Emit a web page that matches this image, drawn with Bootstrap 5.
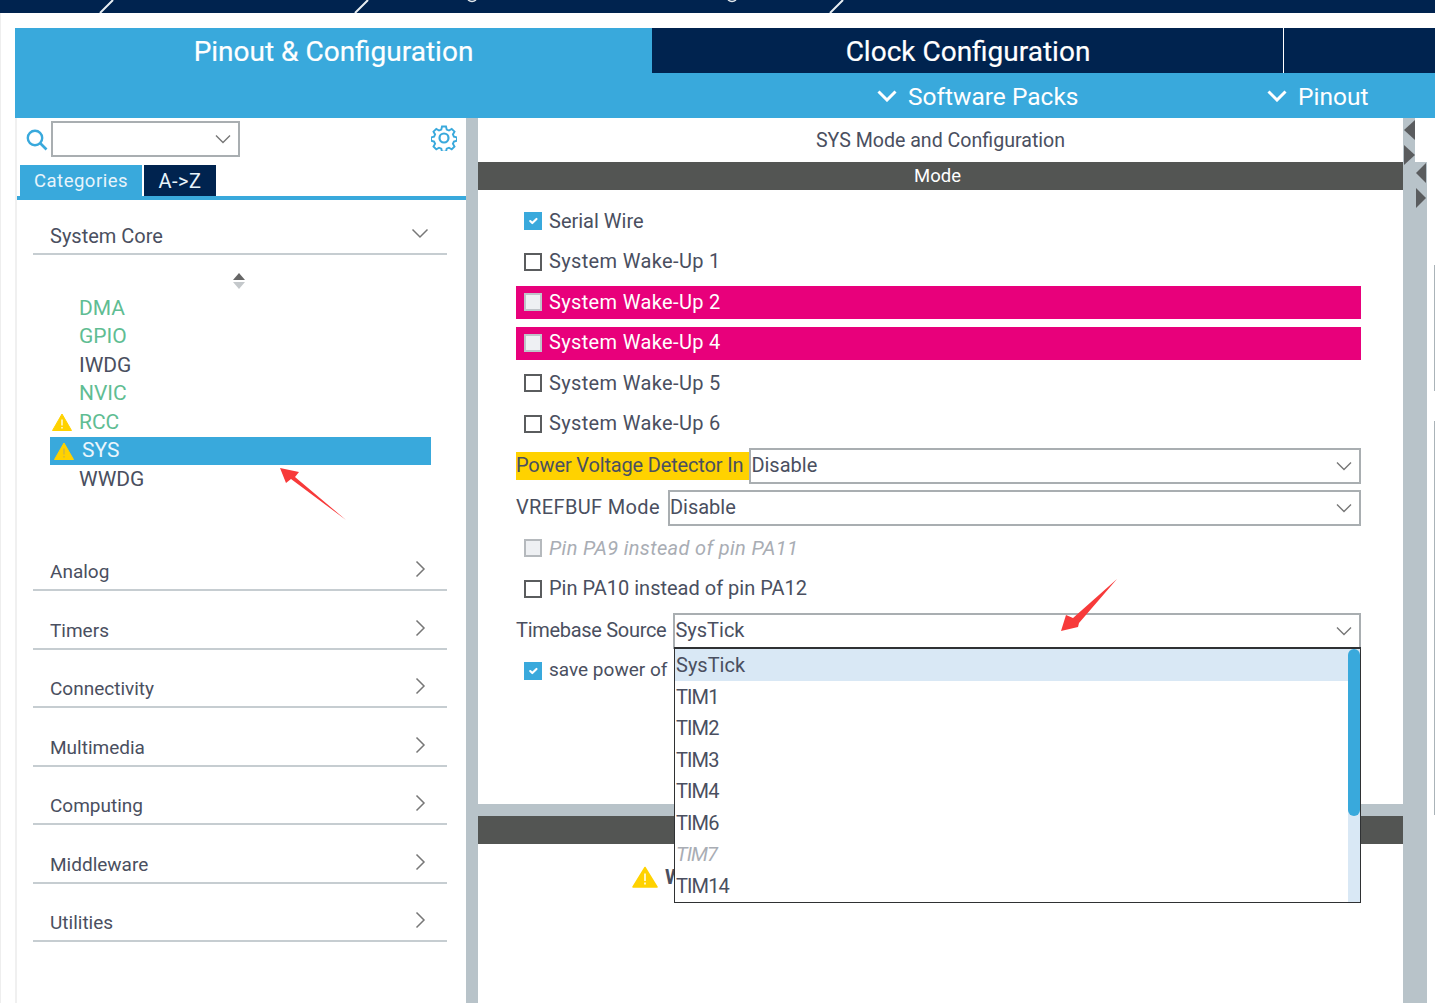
<!DOCTYPE html>
<html lang="en">
<head>
<meta charset="utf-8">
<title>SYS Mode and Configuration</title>
<link rel="stylesheet" href="https://cdn.jsdelivr.net/npm/bootstrap@5.3.0/dist/css/bootstrap.min.css">
<style>
:root{--navy:#00234f;--sky:#39a9dc;--steel:#b8c3c9;--slate:#535553;--ink:#4a4f60;}
html,body{height:1003px;overflow:hidden;}
body{position:relative;background:#fff;box-shadow:inset 1px 0 #eee;font-family:Roboto,"Liberation Sans",sans-serif;color:var(--ink);font-size:20px;line-height:1.2;}
.topbar{height:13px;background:var(--navy);}
.topbar svg{display:block;width:100%;height:13px;}
.shell{margin:15px 0 0 15px;}
.tab-row{height:45px;background:var(--navy);}
.tab-main{font-size:28px;color:#fff;height:45px;padding-top:3px;-webkit-text-stroke:.2px #fff;}
.tab-pin{width:637px;background:var(--sky);margin-right:1px;}
.tab-clk{width:631px;border-right:1px solid #fff;}
.sub-row{height:45px;background:var(--sky);color:#fff;font-size:24.5px;padding-top:2px;}
.sub-soft{margin-left:862px;width:390px;}
.sub-soft span,.sub-pin span{margin-left:3px;}
.body-row{height:885px;}
.left-pane{width:451px;border-left:2px solid #f0f0f0;}
.searchline{height:47px;padding:3px 9px 0 9px;}
.select-plain{appearance:none;height:36px;border:2px solid #a9aeb1;border-radius:0;background:#fff url("data:image/svg+xml,%3csvg xmlns='http://www.w3.org/2000/svg' viewBox='0 0 16 10'%3e%3cpath fill='none' stroke='%23777' stroke-width='1.4' d='M1 1.5l7 7 7-7'/%3e%3c/svg%3e") no-repeat right 7px center/16px 10px;font:20px Roboto,sans-serif;color:var(--ink);padding:0 30px 2px 0;box-shadow:none;}
.search-sel{width:189px;margin-left:3px;}
.tabs-line{height:35px;border-bottom:4px solid var(--sky);padding-left:3px;gap:2px;}
.cat-tab{height:31px;color:#e8f4fb;padding:1px 0 0;}
.cat-a{width:122px;background:var(--sky);font-size:18.5px;letter-spacing:.5px;}
.cat-b{width:72px;background:var(--navy);font-size:20px;letter-spacing:.5px;}
.side-list{padding:0 19px 0 16px;}
.sec-head{border-bottom:2px solid #c6cdd1;padding:0 21px 0 17px;}
.sec-head span{line-height:24px;padding-bottom:5px;}
.sec-head svg{margin-bottom:11px;}
.sec-first{height:55px;padding-right:18px;}
.sec-first svg{margin-bottom:14px;}
.sec-more{height:58.5px;font-size:19px;}
.sort-ico{height:39px;padding-left:200px;padding-top:12px;}
.peri{height:28.5px;padding-left:29px;font-size:21px;position:relative;width:381px;}
.peri-wrap{margin-left:17px;}
.peri.ok{color:#5fbd93;}
.peri.sel{background:var(--sky);color:#eaf6fc;padding-left:32px;}
.peri svg{flex:none;position:absolute;left:2px;top:5px;}
.peri.sel svg{left:4px;}
.spacer-side{height:39px;}
.divider-v{width:12px;background:var(--steel);}
.mid-pane{width:925px;position:relative;}
.pane-title{height:44px;font-size:19.6px;padding-top:1px;}
.pane-bar{height:28px;background:var(--slate);color:#fff;font-size:18.5px;padding-right:6px;}
.mode-list{height:614px;padding:15px 42px 0 38px;}
.mrow{height:33px;margin-bottom:7.5px;white-space:nowrap;}
.mrow > span{margin-bottom:2px;}
.mrow.hot{background:#e8007b;color:#fff;}
.mrow.hot .form-check-input{background:#eef0f3;border-color:#bfc4c9;}
.mrow.tall{height:35px;margin-bottom:7px;}
.form-check-input.box{width:18px;height:18px;margin:0 7px 1px 8px;border:2px solid #5a5c5e;border-radius:0;flex:none;float:none;}
.form-check-input.box:checked{background-color:var(--sky);border-color:var(--sky);}
.form-check-input.box:disabled{opacity:1;background-color:#eef0f3;border-color:#b5b9bd;}
.wide-txt{letter-spacing:.35px;}
.tight-txt{letter-spacing:-.16px;}
.tighter-txt{letter-spacing:-.3px;margin-right:-1px;}
.small-txt{font-size:19px;}
.warn-lab{background:#ffd200;height:28px;padding:0 6px 2px 0;display:flex;align-items:center;margin-bottom:0!important;}
.fill-sel{flex:1;min-width:0;}
.mute-it{color:#a9adb4;font-style:italic;}
.mid-gap{height:12px;background:var(--steel);}
.mid-note{padding:21px 0 0 154px;}
.note-w{font-weight:700;margin-left:7px;}
.side-rail{width:24px;}
.rail-top{width:12px;height:44px;background:var(--steel);}
.rail-rest{flex:1;background:var(--steel);}
.rail-white{width:8px;}
.listbox{position:absolute;left:674px;top:647px;width:687px;height:256px;background:#fff;border:1.5px solid #2f3133;border-top-width:2px;overflow:hidden;z-index:3;font-size:20px;}
.lb-row{height:31.5px;padding-left:1px;}
.lb-row.tim{letter-spacing:-.9px;}
.lb-row.active{height:32px;background:#d9e8f5;padding-right:12px;}
.lb-bar{position:absolute;right:0;top:0;bottom:0;width:12px;background:#d9e8f5;}
.lb-thumb{height:167px;background:var(--sky);border-radius:6px;}
.overlay-svg{position:absolute;z-index:5;pointer-events:none;}
.edge-lines{position:absolute;left:1434px;width:1px;background:#aab3b8;}
.tri{position:absolute;z-index:2;}
</style>
</head>
<body>
<div class="topbar">
<svg viewBox="0 0 1435 13" preserveAspectRatio="none" aria-hidden="true"><path d="M100 13L113 0M355 13L368 0M830 13L843 0" stroke="#e8eef2" stroke-width="2" fill="none"/><path d="M468 0q4 3 8 0M728 0q4 3 8 0" stroke="#dfe6ea" stroke-width="1.5" fill="none"/></svg>
</div>
<div class="shell">
  <div class="tab-row d-flex">
    <div class="tab-main tab-pin d-flex align-items-center justify-content-center">Pinout &amp; Configuration</div>
    <div class="tab-main tab-clk d-flex align-items-center justify-content-center">Clock Configuration</div>
  </div>
  <div class="sub-row d-flex align-items-center">
    <div class="sub-soft d-flex align-items-center gap-2">
      <svg width="20" height="12" viewBox="0 0 20 12" aria-hidden="true"><path d="M1.5 1.5L10 10l8.5-8.500" fill="none" stroke="#fff" stroke-width="3"/></svg>
      <span>Software Packs</span>
    </div>
    <div class="sub-pin d-flex align-items-center gap-2">
      <svg width="20" height="12" viewBox="0 0 20 12" aria-hidden="true"><path d="M1.5 1.5L10 10l8.5-8.500" fill="none" stroke="#fff" stroke-width="3"/></svg>
      <span>Pinout</span>
    </div>
  </div>
  <div class="body-row d-flex">
    <div class="left-pane">
      <div class="searchline d-flex align-items-start justify-content-between">
        <div class="d-flex align-items-start">
          <svg class="mt-2" width="22" height="22" viewBox="0 0 22 22" aria-hidden="true"><circle cx="9" cy="9" r="7.2" fill="none" stroke="#39a9dc" stroke-width="2.4"/><path d="M14 14l6.5 6.5" stroke="#39a9dc" stroke-width="2.6"/></svg>
          <select class="form-select select-plain search-sel" aria-label="Search"><option></option></select>
        </div>
        <svg class="mt-1" width="26" height="26" viewBox="0 0 26 26" aria-hidden="true"><path d="M11 1.5h4l.7 3 2.3 1 2.7-1.600 2.800 2.800-1.600 2.700 1 2.300 3 .7v3.400l-3 .7-1 2.300 1.600 2.700-2.800 2.800-2.700-1.600-2.300 1-.7 3h-4l-.7-3-2.300-1-2.700 1.600-2.800-2.800 1.600-2.700-1-2.300-3-.7v-3.400l3-.7 1-2.300-1.600-2.700 2.800-2.800 2.700 1.600 2.300-1z" fill="none" stroke="#39a9dc" stroke-width="1.900"/><circle cx="13" cy="13" r="4.500" fill="none" stroke="#39a9dc" stroke-width="2.200"/></svg>
      </div>
      <div class="tabs-line d-flex">
        <div class="cat-tab cat-a d-flex align-items-center justify-content-center">Categories</div>
        <div class="cat-tab cat-b d-flex align-items-center justify-content-center">A-&gt;Z</div>
      </div>
      <div class="side-list">
        <div class="sec-head sec-first d-flex align-items-end justify-content-between">
          <span>System Core</span>
          <svg width="18" height="11" viewBox="0 0 18 11" aria-hidden="true"><path d="M1.500 1.500L9 9l7.500-7.500" fill="none" stroke="#777" stroke-width="1.500"/></svg>
        </div>
        <div class="sort-ico d-flex align-items-center">
          <svg width="12" height="16" viewBox="0 0 12 16" aria-hidden="true"><path d="M6 0l6 7H0z" fill="#666"/><path d="M6 16l6-7H0z" fill="#c4c8cb"/></svg>
        </div>
        <div class="peri-wrap">
          <div class="peri ok d-flex align-items-center">DMA</div>
          <div class="peri ok d-flex align-items-center">GPIO</div>
          <div class="peri d-flex align-items-center">IWDG</div>
          <div class="peri ok d-flex align-items-center">NVIC</div>
          <div class="peri ok d-flex align-items-center"><svg width="20" height="18" viewBox="0 0 20 18" aria-hidden="true"><path d="M10 1L19.500 17.500H.5z" fill="#ffd200" stroke="#ffd200" stroke-linejoin="round"/><path d="M10 6.500v6M10 14v1.500" stroke="#fff" stroke-width="1.300"/></svg>RCC</div>
          <div class="peri sel d-flex align-items-center"><svg width="20" height="18" viewBox="0 0 20 18" aria-hidden="true"><path d="M10 1L19.500 17.500H.5z" fill="#ffd200" stroke="#ffd200" stroke-linejoin="round"/><path d="M10 6.500v6M10 14v1.500" stroke="#c9b34a" stroke-width="1.300"/></svg>SYS</div>
          <div class="peri d-flex align-items-center">WWDG</div>
        </div>
        <div class="spacer-side"></div>
        <div class="sec-head sec-more d-flex align-items-end justify-content-between"><span>Analog</span><svg width="11" height="18" viewBox="0 0 11 18" aria-hidden="true"><path d="M1.500 1.500L9 9l-7.500 7.500" fill="none" stroke="#777" stroke-width="1.500"/></svg></div>
        <div class="sec-head sec-more d-flex align-items-end justify-content-between"><span>Timers</span><svg width="11" height="18" viewBox="0 0 11 18" aria-hidden="true"><path d="M1.500 1.500L9 9l-7.500 7.500" fill="none" stroke="#777" stroke-width="1.500"/></svg></div>
        <div class="sec-head sec-more d-flex align-items-end justify-content-between"><span>Connectivity</span><svg width="11" height="18" viewBox="0 0 11 18" aria-hidden="true"><path d="M1.500 1.500L9 9l-7.500 7.500" fill="none" stroke="#777" stroke-width="1.500"/></svg></div>
        <div class="sec-head sec-more d-flex align-items-end justify-content-between"><span>Multimedia</span><svg width="11" height="18" viewBox="0 0 11 18" aria-hidden="true"><path d="M1.500 1.500L9 9l-7.500 7.500" fill="none" stroke="#777" stroke-width="1.500"/></svg></div>
        <div class="sec-head sec-more d-flex align-items-end justify-content-between"><span>Computing</span><svg width="11" height="18" viewBox="0 0 11 18" aria-hidden="true"><path d="M1.500 1.500L9 9l-7.500 7.500" fill="none" stroke="#777" stroke-width="1.500"/></svg></div>
        <div class="sec-head sec-more d-flex align-items-end justify-content-between"><span>Middleware</span><svg width="11" height="18" viewBox="0 0 11 18" aria-hidden="true"><path d="M1.500 1.500L9 9l-7.500 7.500" fill="none" stroke="#777" stroke-width="1.500"/></svg></div>
        <div class="sec-head sec-more d-flex align-items-end justify-content-between"><span>Utilities</span><svg width="11" height="18" viewBox="0 0 11 18" aria-hidden="true"><path d="M1.500 1.500L9 9l-7.500 7.500" fill="none" stroke="#777" stroke-width="1.500"/></svg></div>
      </div>
    </div>
    <div class="divider-v"></div>
    <div class="mid-pane">
      <div class="pane-title d-flex align-items-center justify-content-center">SYS Mode and Configuration</div>
      <div class="pane-bar d-flex align-items-center justify-content-center">Mode</div>
      <div class="mode-list">
        <div class="mrow d-flex align-items-center"><input class="form-check-input box" type="checkbox" checked aria-label="Serial Wire"><span>Serial Wire</span></div>
        <div class="mrow d-flex align-items-center"><input class="form-check-input box" type="checkbox" aria-label="System Wake-Up 1"><span class="wide-txt">System Wake-Up 1</span></div>
        <div class="mrow hot d-flex align-items-center"><input class="form-check-input box" type="checkbox" aria-label="System Wake-Up 2"><span class="wide-txt">System Wake-Up 2</span></div>
        <div class="mrow hot d-flex align-items-center"><input class="form-check-input box" type="checkbox" aria-label="System Wake-Up 4"><span class="wide-txt">System Wake-Up 4</span></div>
        <div class="mrow d-flex align-items-center"><input class="form-check-input box" type="checkbox" aria-label="System Wake-Up 5"><span class="wide-txt">System Wake-Up 5</span></div>
        <div class="mrow d-flex align-items-center"><input class="form-check-input box" type="checkbox" aria-label="System Wake-Up 6"><span class="wide-txt">System Wake-Up 6</span></div>
        <div class="mrow tall d-flex align-items-center"><span class="warn-lab tight-txt">Power Voltage Detector In</span><select class="form-select select-plain fill-sel" aria-label="Power Voltage Detector In"><option>Disable</option></select></div>
        <div class="mrow tall d-flex align-items-center gap-2"><span class="wide-txt">VREFBUF Mode</span><select class="form-select select-plain fill-sel" aria-label="VREFBUF Mode"><option>Disable</option></select></div>
        <div class="mrow d-flex align-items-center"><input class="form-check-input box" type="checkbox" disabled aria-label="Pin PA9"><span class="mute-it wide-txt">Pin PA9 instead of pin PA11</span></div>
        <div class="mrow d-flex align-items-center"><input class="form-check-input box" type="checkbox" aria-label="Pin PA10"><span>Pin PA10 instead of pin PA12</span></div>
        <div class="mrow tall d-flex align-items-center gap-2"><span class="tighter-txt">Timebase Source</span><select class="form-select select-plain fill-sel" aria-label="Timebase Source"><option>SysTick</option></select></div>
        <div class="mrow d-flex align-items-center"><input class="form-check-input box" type="checkbox" checked aria-label="save power"><span class="small-txt">save power of</span></div>
      </div>
      <div class="mid-gap"></div>
      <div class="pane-bar"></div>
      <div class="mid-note d-flex align-items-center">
        <svg width="26" height="22" viewBox="0 0 26 22" aria-hidden="true"><path d="M13 1.500L25 21H1z" fill="#ffd200" stroke="#ffd200" stroke-width="1.500" stroke-linejoin="round"/><path d="M13 7.500v7.500M13 16.500v2" stroke="#fff" stroke-width="1.500"/></svg>
        <span class="note-w">W</span>
      </div>
    </div>
    <div class="side-rail d-flex flex-column">
      <div class="rail-top"></div>
      <div class="rail-rest"></div>
    </div>
    <div class="rail-white"></div>
  </div>
</div>

<div class="listbox">
  <div class="lb-bar"><div class="lb-thumb"></div></div>
  <div class="lb-row active d-flex align-items-center">SysTick</div>
  <div class="lb-row tim d-flex align-items-center">TIM1</div>
  <div class="lb-row tim d-flex align-items-center">TIM2</div>
  <div class="lb-row tim d-flex align-items-center">TIM3</div>
  <div class="lb-row tim d-flex align-items-center">TIM4</div>
  <div class="lb-row tim d-flex align-items-center">TIM6</div>
  <div class="lb-row tim mute-it d-flex align-items-center">TIM7</div>
  <div class="lb-row tim d-flex align-items-center">TIM14</div>
</div>

<svg class="tri" style="left:1404px;top:120px" width="11" height="45" viewBox="0 0 11 45" aria-hidden="true"><path d="M11 0v20L0 10z" fill="#5a5c5e"/><path d="M0 25v20l11-10z" fill="#5a5c5e"/></svg>
<svg class="tri" style="left:1416px;top:163px" width="11" height="45" viewBox="0 0 11 45" aria-hidden="true"><path d="M10 0v20L0 10z" fill="#5a5c5e"/><path d="M0 25v20l10-10z" fill="#5a5c5e"/></svg>
<div class="edge-lines" style="top:265px;height:126px"></div>
<div class="edge-lines" style="top:421px;height:394px"></div>

<svg class="overlay-svg" style="left:0;top:0" width="1435" height="1003" viewBox="0 0 1435 1003" aria-hidden="true">
  <path d="M280 468L299 472L295 477L346 520L291 479L286 483Z" fill="#f73a3a"/>
  <path d="M1061 631L1066 615L1073 618L1117 579L1079 623L1078 627Z" fill="#f73a3a"/>
</svg>
<script src="https://cdn.jsdelivr.net/npm/bootstrap@5.3.0/dist/js/bootstrap.bundle.min.js"></script>
</body>
</html>
